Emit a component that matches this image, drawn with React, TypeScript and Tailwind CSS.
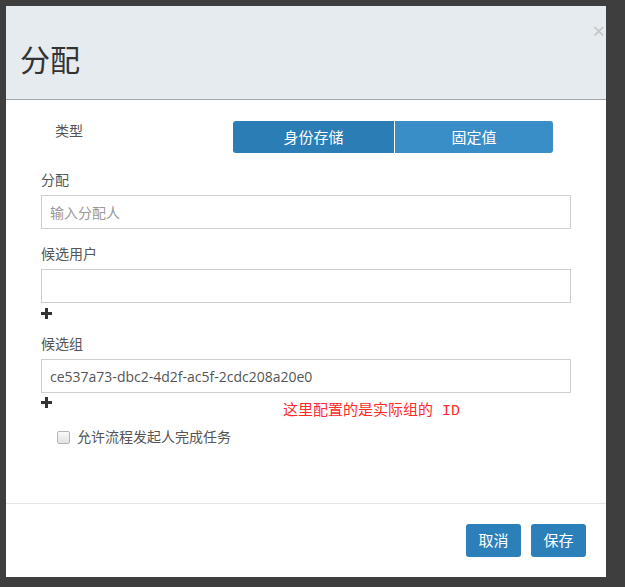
const CJK = "font-['Open_Sans','Noto_Sans_CJK_SC',sans-serif]";

function PlusIcon() {
  return (
    <svg width="11" height="11" viewBox="0 0 11 11" className="block">
      <rect x="4" y="0" width="3" height="11" fill="#333" />
      <rect x="0" y="4" width="11" height="3" fill="#333" />
    </svg>
  );
}

function Field({ label, value, placeholder }: { label: string; value?: string; placeholder?: string }) {
  return (
    <div>
      <div className="text-[14px] leading-[20px] text-[#555]">{label}</div>
      <div className="mt-[5px] h-[34px] border border-[#cfcfcf] bg-white px-[8px] flex items-center text-[14px]">
        {value ? (
          <span className="text-[#555]">{value}</span>
        ) : (
          <span className="text-[#999]">{placeholder}</span>
        )}
      </div>
    </div>
  );
}

export default function App() {
  return (
    <div className={`w-[625px] h-[587px] bg-[#3e3e3e] pt-[6px] pl-[6px] ${CJK}`}>
      <div className="relative w-[600px] h-[571px] bg-white flex flex-col">
        {/* header */}
        <div className="h-[94px] bg-[#e6ebef] border-b border-[#a1a6aa] pl-[14px] pt-[34px]">
          <h2 className="text-[30px] leading-[40px] text-[#333]">分配</h2>
        </div>
        <span className="absolute right-[1px] top-[12px] text-[22px] leading-[24px] text-[#c4c4c4]">×</span>

        {/* body */}
        <div className="flex-1 px-[35px] pt-[21px]">
          <div className="flex items-start">
            <div className="w-[192px] pl-[14px] text-[14px] leading-[20px] text-[#555]">类型</div>
            <div className="flex gap-[1px]">
              <button className="w-[161px] h-[32px] rounded-l-[3px] bg-[#2b7db5] text-white text-[15px]">身份存储</button>
              <button className="w-[158px] h-[32px] rounded-r-[3px] bg-[#3a8ec8] text-white text-[15px]">固定值</button>
            </div>
          </div>

          <div className="mt-[17px]">
            <Field label="分配" placeholder="输入分配人" />
          </div>

          <div className="mt-[15px]">
            <Field label="候选用户" />
            <div className="h-[21px] pt-[5px]">
              <PlusIcon />
            </div>
          </div>

          <div className="mt-[10px]">
            <Field label="候选组" value="ce537a73-dbc2-4d2f-ac5f-2cdc208a20e0" />
            <div className="flex items-start h-[26px]">
              <div className="pt-[4px]">
                <PlusIcon />
              </div>
              <span className="ml-[231px] mt-[9px] text-[15px] leading-[20px] text-[#ff2a2a] font-['Liberation_Mono','Noto_Sans_CJK_SC',monospace]">
                这里配置的是实际组的 ID
              </span>
            </div>
          </div>

          <label className="mt-[9px] ml-[16px] flex items-center gap-[7px]">
            <span className="w-[13px] h-[13px] rounded-[2px] border border-[#b5b5b5] bg-gradient-to-b from-[#fafafa] to-[#e2e2e2]" />
            <span className="text-[14px] leading-[18px] text-[#555]">允许流程发起人完成任务</span>
          </label>
        </div>

        {/* footer */}
        <div className="h-[74px] border-t border-[#e5e5e5] flex justify-end items-start gap-[10px] pt-[20px] pr-[20px]">
          <button className="w-[55px] h-[33px] rounded-[3px] bg-[#2b80b9] text-white text-[15px]">取消</button>
          <button className="w-[55px] h-[33px] rounded-[3px] bg-[#2b80b9] text-white text-[15px]">保存</button>
        </div>
      </div>
    </div>
  );
}
